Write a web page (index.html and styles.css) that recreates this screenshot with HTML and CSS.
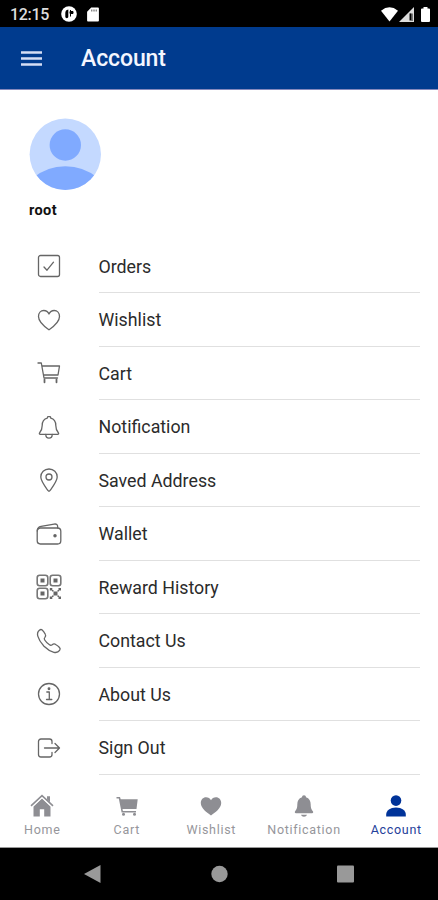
FILE: index.html
```html
<!DOCTYPE html>
<html lang="en">
<head>
    <meta charset="UTF-8">
    <meta name="viewport" content="width=device-width, initial-scale=1.0">
    <title>Account</title>
    <link rel="stylesheet" href="styles.css">
</head>
<body>
    <div class="screen">
        <div class="status-bar">
            <span class="time">12:15</span>
            <svg class="status-app" width="16" height="16" viewBox="0 0 16 16">
                <circle cx="8" cy="8" r="7.8" fill="#fff"/>
                <path d="M7.300 3.500v7c0 2.300-3 2.300-3 0V7c0-2 1-3.200 3-3.500z" fill="#000"/>
                <path d="M9.500 4v6.500M9 5.500h3v2H9z" stroke="#000" stroke-width="1"/>
            </svg>
            <svg class="status-card" width="12" height="15" viewBox="0 0 12 15">
                <path d="M4.200.5H11a.9.9 0 0 1 .9.9v12.200a.9.9 0 0 1-.9.9H1a.9.9 0 0 1-.9-.9V4.800z" fill="#fff"/>
                <path d="M4.800 2.500v2M7 2.500v2M9.200 2.500v2" stroke="#555" stroke-width="1"/>
            </svg>
            <div class="status-right">
                <svg width="17" height="15" viewBox="0 0 17 15">
                    <path d="M0 3.700Q8.500-3 17 3.700L8.500 14.500z" fill="#fff"/>
                </svg>
                <svg width="15" height="15" viewBox="0 0 15 15">
                    <path d="M15 0v15H0z" fill="#ddd"/>
                    <path d="M10.500 6.500h3.500v7.500h-3.500z" fill="#777"/>
                    <path d="M11.500 6.500v6.500" stroke="#000" stroke-width="1.600"/>
                </svg>
                <svg class="battery" width="9" height="15" viewBox="0 0 9 15">
                    <path d="M2.500 0h4v1.500H8a1 1 0 0 1 1 1V14a1 1 0 0 1-1 1H1a1 1 0 0 1-1-1V2.500a1 1 0 0 1 1-1h1.500z" fill="#fff"/>
                </svg>
            </div>
        </div>

        <header class="toolbar">
            <svg class="menu-icon" width="21" height="15" viewBox="0 0 21 15">
                <path d="M0 1.500h21M0 7.500h21M0 13.500h21" stroke="#d5def5" stroke-width="2.400"/>
            </svg>
            <h1>Account</h1>
        </header>

        <main>
            <div class="profile">
                <svg width="72" height="72" viewBox="0 0 72 72">
                    <clipPath id="avatar"><circle cx="36.300" cy="36.300" r="35.700"/></clipPath>
                    <g clip-path="url(#avatar)">
                        <rect width="72" height="72" fill="#c4d9ff"/>
                        <circle cx="36.300" cy="27" r="15.700" fill="#80aaff"/>
                        <path d="M4 60Q18 48.300 36.300 48.300T69 60v12H4z" fill="#80aaff"/>
                    </g>
                </svg>
                <p class="username">root</p>
            </div>

            <ul class="menu">
                <li>
                    <svg viewBox="0 0 26 26"><rect x="2.500" y="2.500" width="21" height="21" rx="2"/><path d="M8 14l3 3.200 6.500-8"/></svg>
                    <span>Orders</span>
                </li>
                <li>
                    <svg viewBox="0 0 26 26"><path d="M13 22.800C9 20 2.500 15.500 2.500 9.500c0-3.500 2.300-6 5.300-6 2.400 0 4.200 1.300 5.200 3.500 1-2.200 2.800-3.500 5.200-3.500 3 0 5.300 2.500 5.300 6 0 6-6.500 10.500-10.500 13.300z"/></svg>
                    <span>Wishlist</span>
                </li>
                <li>
                    <svg viewBox="0 0 26 26"><path d="M2 3h3.300l2.700 15h13.500M6 6h17.500l-1.500 9H7.600"/><path d="M8.500 19.500v2.800M20.500 19.500v2.800" stroke-width="1.800"/></svg>
                    <span>Cart</span>
                </li>
                <li>
                    <svg viewBox="0 0 26 26"><path d="M13 2.300c-1.200 0-1.700.7-1.700 1.800C7.500 5 6.200 8 6.200 11.500c0 4.500-1 5.500-2.700 7.500-.4.700 0 1.300.8 1.300h17.400c.8 0 1.200-.6.8-1.300-1.700-2-2.700-3-2.700-7.500 0-3.500-1.300-6.500-5.100-7.400 0-1.100-.5-1.800-1.700-1.800z"/><path d="M9.800 20.500c0 2 1.200 3.700 3.200 3.700s3.200-1.700 3.200-3.700"/></svg>
                    <span>Notification</span>
                </li>
                <li>
                    <svg viewBox="0 0 26 26"><path d="M13 2c-4.700 0-8.200 3.500-8.200 8 0 4 4.700 10 7.300 13.700.5.700 1.300.7 1.800 0C16.500 20 21.200 14 21.200 10c0-4.500-3.500-8-8.200-8z"/><circle cx="13" cy="10" r="3"/></svg>
                    <span>Saved Address</span>
                </li>
                <li>
                    <svg viewBox="0 0 26 26"><rect x="1.200" y="7" width="23.600" height="16" rx="3.200"/><path d="M1.300 10c0-3 1.500-4.200 3.800-4.600l13-2.300c2.500-.4 3.600.6 3.600 2.900v1"/><circle cx="19" cy="14.800" r="1.100" fill="#555"/></svg>
                    <span>Wallet</span>
                </li>
                <li>
                    <svg class="qr" viewBox="0 0 26 26">
                        <rect x="1.200" y="1.200" width="10.600" height="10.600" rx="2.500"/><rect x="14.200" y="1.200" width="10.600" height="10.600" rx="2.500"/><rect x="1.200" y="14.200" width="10.600" height="10.600" rx="2.500"/>
                        <path d="M4.500 4.500h4v4h-4zM17.500 4.500h4v4h-4zM4.500 17.500h4v4h-4zM17.500 17.500h4v4h-4zM13.800 14h2.500v2.500h-2.500zM22.500 14H25v2.500h-2.500zM13.800 22.500h2.500V25h-2.500zM22.500 22.500H25V25h-2.500zM16 16h1.500v1.500H16zM21.500 16H23v1.500h-1.500zM21.500 21.500H23V23h-1.500zM16 21.500h1.500V23H16z" class="solid"/>
                    </svg>
                    <span>Reward History</span>
                </li>
                <li>
                    <svg viewBox="0 0 26 26"><path d="M23.500 19.500c-1-1.300-3-2.600-4.300-3.300-1.400-.7-2.200-.2-3 .5-1 .8-1.500 1-2.700.1-1.500-1-3.800-3.200-4.800-4.800-.8-1.200-.7-1.700.2-2.600.8-.9 1.200-1.700.4-3.100C8.500 4.700 7.200 2.900 6.200 2c-1-.8-1.800-.6-2.800.2C1.900 3.400 1 5.200 1.800 8.200c.9 3.200 3 6.700 6.200 10 3.300 3.200 6.800 5.300 9.900 6.100 3 .7 4.600-.3 5.700-1.900.8-1 .8-1.900-.1-2.900z"/></svg>
                    <span>Contact Us</span>
                </li>
                <li>
                    <svg viewBox="0 0 26 26"><circle cx="13" cy="13" r="10.500"/><path d="M10.800 11h2.500v7.500M10.500 18.500h5.300"/><circle cx="13" cy="7.700" r=".8" fill="#555"/></svg>
                    <span>About Us</span>
                </li>
                <li>
                    <svg viewBox="0 0 26 26"><path d="M16 8.500V6.500C16 5 15 4 13.500 4H5C3.500 4 2.500 5 2.500 6.500v13C2.500 21 3.500 22 5 22h8.500c1.500 0 2.500-1 2.500-2.500v-2M19 8.500l4.500 4.500-4.500 4.500M8.500 13h14.500"/></svg>
                    <span>Sign Out</span>
                </li>
            </ul>
        </main>

        <nav class="tabs">
            <a class="tab home">
                <svg viewBox="0 0 24 24"><path d="M12 4.500L3.500 12.500V22.500h6.300v-7.300h4.400v7.300h6.300V12.500zM17 2.300h3v6l-3-2.800z"/><path d="M1 11.800L12 1.700l11 10.100" fill="none" stroke="#8e8e93" stroke-width="1.600"/><path d="M2.500 12.700L12 4l9.500 8.700" fill="none" stroke="#fff" stroke-width=".8"/></svg>
                <span>Home</span>
            </a>
            <a class="tab cart">
                <svg viewBox="0 0 24 24"><path d="M1.500 3H5l.7 2.200h17L21.500 15H7.500l.4 2H21v1.500H6.600L3.800 4.500H1.500z"/><circle cx="8.500" cy="20.200" r="1.500"/><circle cx="19.500" cy="20.200" r="1.500"/></svg>
                <span>Cart</span>
            </a>
            <a class="tab wishlist">
                <svg viewBox="0 0 24 24"><path d="M12 21.500C8 18.500 1.800 14.500 1.800 9c0-3.300 2.300-5.700 5.200-5.700 2.300 0 4 1.200 5 3 1-1.800 2.700-3 5-3 2.900 0 5.200 2.400 5.200 5.700 0 5.500-6.200 9.500-10.200 12.500z"/></svg>
                <span>Wishlist</span>
            </a>
            <a class="tab notification">
                <svg viewBox="0 0 24 24"><path d="M12 1.300c-1.300 0-1.900.8-2 2C6.700 4.300 5.300 7 5.300 10.500c0 4-1 5-2.200 6.800-.7 1-.2 1.900.8 1.900h16.200c1 0 1.500-.9.800-1.900-1.200-1.800-2.200-2.800-2.200-6.800 0-3.500-1.400-6.200-4.700-7.200-.1-1.200-.7-2-2-2zM9 20.700h6c-.4 1.300-1.500 2-3 2s-2.600-.7-3-2z"/></svg>
                <span>Notification</span>
            </a>
            <a class="tab account active">
                <svg viewBox="0 0 24 24"><circle cx="12" cy="6.600" r="5.300"/><path d="M2.200 22.500v-2c0-4 4-7 9.800-7s9.800 3 9.800 7v2z"/></svg>
                <span>Account</span>
            </a>
        </nav>

        <div class="system-nav">
            <svg width="17" height="18" viewBox="0 0 17 18"><path d="M0 9L16.500 0v18z"/></svg>
            <svg width="17" height="18" viewBox="0 0 17 18"><circle cx="8.500" cy="9" r="8.200"/></svg>
            <svg width="17" height="18" viewBox="0 0 17 18"><rect y=".5" width="17" height="17" rx="1"/></svg>
        </div>
    </div>
</body>
</html>
```
FILE: styles.css
```css
* {
    box-sizing: border-box;
}
body {
    margin: 0;
    font-family: Roboto, "Liberation Sans", sans-serif;
    background-color: #fff;
}
svg {
    display: block;
    flex-shrink: 0;
}
.screen {
    width: 438px;
    height: 900px;
    display: flex;
    flex-direction: column;
    overflow: hidden;
}

/* Status bar */
.status-bar {
    height: 27px;
    padding: 1px 8px 0 10px;
    display: flex;
    align-items: center;
    background-color: #000;
    color: #ddd;
}
.time {
    width: 51px;
    font-size: 16px;
    font-weight: 500;
    letter-spacing: -0.3px;
}
.status-card {
    margin-left: 10px;
}
.status-right {
    display: flex;
    margin-left: auto;
    gap: 1px;
}
.battery {
    margin-left: 6px;
}

/* Header */
.toolbar {
    height: 63px;
    padding: 0 21px;
    display: flex;
    align-items: center;
    background-color: #003b8e;
    border-bottom: 1px solid #8589bd;
}
.toolbar h1 {
    margin: 0 0 0 39px;
    font-size: 23px;
    font-weight: 500;
    letter-spacing: -0.1px;
    color: #f4f6ff;
}

main {
    flex: 1;
}
.profile {
    height: 149.5px;
    padding: 28px 29px 0;
}
.username {
    margin: 12px 0 0;
    font-size: 14.5px;
    line-height: 18px;
    font-weight: 700;
    letter-spacing: 0.4px;
    color: #111;
}

/* Account menu */
.menu {
    margin: 0;
    padding: 0 18px 0 36px;
    list-style: none;
}
.menu li {
    height: 53.5px;
    display: flex;
    align-items: center;
}
.menu svg {
    width: 26px;
    height: 26px;
    fill: none;
    stroke: #666;
    stroke-width: 1.3;
    stroke-linejoin: round;
    stroke-linecap: round;
}
.menu .qr {
    stroke: #777;
    stroke-width: 1.6;
}
.menu .solid {
    fill: #666;
    stroke: none;
}
.menu span {
    flex: 1;
    height: 100%;
    margin-left: 36.5px;
    border-bottom: 1px solid #e0e0e0;
    font-size: 17.8px;
    line-height: 53px;
    color: #2b2b2b;
}

/* Bottom tabs */
.tabs {
    height: 73px;
    display: flex;
    border-bottom: 1px solid #999;
}
.tab {
    width: 84.5px;
    padding-top: 19px;
    display: flex;
    flex-direction: column;
    align-items: center;
    font-size: 12.5px;
    letter-spacing: 0.7px;
    color: #96969b;
    fill: #8e8e93;
}
.tab svg {
    width: 24px;
    height: 24px;
}
.tab span {
    margin-top: 5px;
    line-height: 14px;
}
.notification {
    width: 101px;
}
.account {
    width: 83.5px;
}
.active {
    color: #24409a;
    fill: #003399;
}

/* Android buttons */
.system-nav {
    height: 52px;
    padding: 0 84px;
    display: flex;
    justify-content: space-between;
    align-items: center;
    background-color: #000;
    fill: #999;
}
```
